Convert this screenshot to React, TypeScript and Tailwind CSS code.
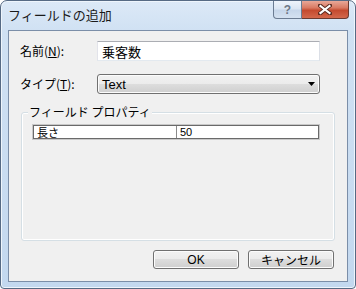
import React from "react";

const jp = { fontFamily: '"Noto Sans CJK JP", "Liberation Sans", sans-serif' };
const ui = { fontFamily: '"Liberation Sans", "Noto Sans CJK JP", sans-serif' };

function Win7Button({ children, className = "" }: { children: React.ReactNode; className?: string }) {
  return (
    <div
      className={`h-[19px] rounded-[3px] border border-[#707070] bg-[linear-gradient(to_bottom,#f2f2f2_0%,#ebebeb_50%,#dddddd_50%,#cfcfcf_100%)] shadow-[inset_0_0_0_1px_#fcfcfc] flex items-center justify-center text-[12px] leading-none text-black ${className}`}
    >
      {children}
    </div>
  );
}

export default function App() {
  return (
    <div className="w-[356px] h-[289px] bg-white">
      <div className="w-[356px] h-[289px] rounded-t-[7px] rounded-b-[4px] border border-[#566a84] bg-[linear-gradient(to_bottom,#dce9f7_0px,#d0e1f3_30px,#c3d8ef_100%)] flex flex-col shadow-[inset_0_0_0_1px_#eef5fc]">
        {/* Title bar */}
        <div className="h-[29px] flex items-start">
          <div className="pl-[7px] pt-[6px] text-[13px] leading-[16px] text-[#1a1a1a]" style={jp}>
            フィールドの追加
          </div>
          <div className="ml-auto mr-[6px] flex">
            <div className="w-[29px] h-[18px] rounded-bl-[4px] border border-t-0 border-[#6b7c92] bg-[linear-gradient(to_bottom,#eef4fb_0%,#dbe6f3_45%,#c6d6ea_55%,#d4e2f1_100%)] flex items-center justify-center">
              <span className="text-[12px] font-bold leading-none text-[#6e7886]" style={ui}>?</span>
            </div>
            <div className="w-[47px] h-[18px] rounded-br-[4px] border border-l-0 border-t-0 border-[#6b3a30] bg-[linear-gradient(to_bottom,#e9a898_0%,#d97a63_40%,#c44a2f_55%,#d3684c_100%)] flex items-center justify-center">
              <svg width="14" height="11" viewBox="0 0 14 11">
                <path d="M2 1.5 L12 9.5 M12 1.5 L2 9.5" stroke="#5a2a20" strokeWidth="4" strokeLinecap="square" />
                <path d="M2.5 2 L11.5 9 M11.5 2 L2.5 9" stroke="#ffffff" strokeWidth="2.2" strokeLinecap="square" />
              </svg>
            </div>
          </div>
        </div>

        {/* Client area */}
        <div className="mx-[7px] mb-[6px] flex-1 border border-[#7b8ea8] bg-[#f0f0f0] flex flex-col pt-[10px] text-[12px] text-black" style={jp}>
          <div className="flex items-center pl-[11px]">
            <div className="w-[77px] leading-none">
              名前(<span className="underline">N</span>):
            </div>
            <div className="w-[223px] h-[20px] border border-[#abadb3] border-l-[#e2e3ea] border-r-[#dbdfe6] border-b-[#e3e9ef] bg-white flex items-center pl-[4px] text-[13px] leading-none">
              乗客数
            </div>
          </div>

          <div className="flex items-center pl-[11px] mt-[13px]">
            <div className="w-[77px] leading-none">
              タイプ(<span className="underline">T</span>):
            </div>
            <div className="w-[223px] h-[20px] rounded-[3px] border border-[#707070] bg-[linear-gradient(to_bottom,#f2f2f2_0%,#ebebeb_50%,#dddddd_50%,#cfcfcf_100%)] shadow-[inset_0_0_0_1px_#fcfcfc] flex items-center pl-[4px] pr-[4px]">
              <span className="text-[13px] leading-none" style={ui}>Text</span>
              <svg className="ml-auto" width="7" height="4" viewBox="0 0 7 4">
                <path d="M0 0 H7 L3.5 4 Z" fill="#000" />
              </svg>
            </div>
          </div>

          <div className="relative ml-[12px] mt-[18px] w-[314px] h-[129px] rounded-[3px] border border-[#d5dfe5] shadow-[inset_0_0_0_1px_#ffffff] pt-[12px] pl-[11px]">
            <div className="absolute left-[6px] top-[-9px] bg-[#f0f0f0] px-[1px] leading-[16px]">
              フィールド プロパティ
            </div>
            <div className="w-[286px] h-[14px] border border-[#6a6a6a] bg-white flex text-[11px] leading-none shadow-[0_0_0_1px_#c8c8c8]">
              <div className="w-[143px] border-r border-[#8a8a8a] flex items-center pl-[3px]">長さ</div>
              <div className="flex-1 flex items-center pl-[3px]" style={ui}>50</div>
            </div>
          </div>

          <div className="flex justify-end gap-[9px] mt-[9px] pr-[13px]">
            <Win7Button className="w-[86px]">
              <span style={ui}>OK</span>
            </Win7Button>
            <Win7Button className="w-[86px]">キャンセル</Win7Button>
          </div>
        </div>
      </div>
    </div>
  );
}
